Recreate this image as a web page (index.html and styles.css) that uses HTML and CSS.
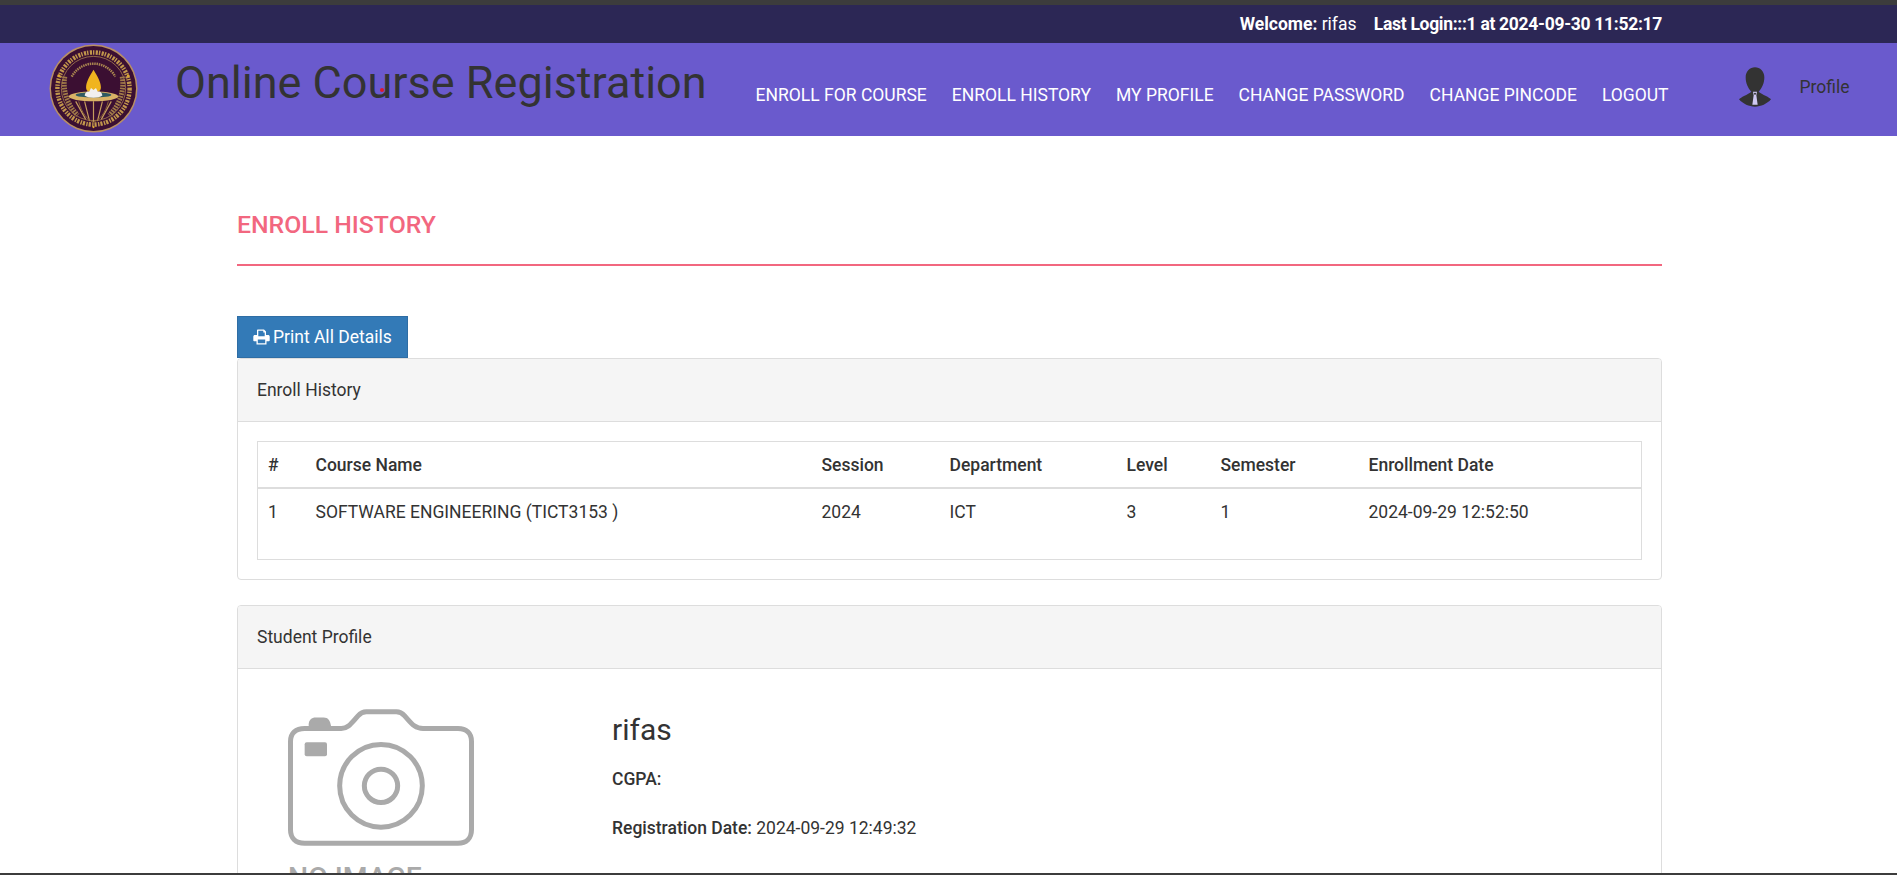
FILE: index.html
```html
<!DOCTYPE html>
<html lang="en">
<head>
<meta charset="utf-8">
<title>Enroll History</title>
<link rel="stylesheet" href="styles.css">
</head>
<body>
<header class="site-header">
  <div class="topbar">
    <div class="topbar-inner"><strong>Welcome:</strong> rifas <strong class="last-login">Last Login:::1 at 2024-09-30 11:52:17</strong></div>
  </div>
  <div class="navbar">
    <svg class="logo" viewBox="0 0 90 90" aria-label="University emblem">
      <circle cx="45" cy="45" r="44.500" fill="#b98f63"/>
      <circle cx="45" cy="45" r="43" fill="#3b0f32"/>
      <circle cx="45" cy="45" r="36.500" fill="none" stroke="#c2974c" stroke-width="4.500" stroke-dasharray="2.200 1 1.400 1.400"/>
      <circle cx="45" cy="45" r="32.500" fill="none" stroke="#a98050" stroke-width=".8"/>
      <path d="M23 33A25 25 0 0 1 67 33" fill="none" stroke="#a9854f" stroke-width="2.500" stroke-dasharray="1.500 .8"/>
      <path d="M16 33C14 45 17 60 29 72M74 33C76 45 73 60 61 72" fill="none" stroke="#a07a48" stroke-width="5" stroke-dasharray="1.800 1"/>
      <circle cx="10" cy="32" r="1.300" fill="#e0a92f"/>
      <circle cx="80" cy="32" r="1.300" fill="#e0a92f"/>
      <circle cx="45" cy="84" r="1.100" fill="#e0a92f"/>
      <path d="M27 58L37 76M36 58L41 78M45 58V79M54 58L49 78M63 58L53 76" stroke="#c59c5d" stroke-width="1.200" fill="none"/>
      <path d="M30 58C33 70 39 77 45 79C51 77 57 70 60 58" fill="none" stroke="#8a6238" stroke-width="1"/>
      <path d="M45 26C41 33 37.500 38 37.500 44C37.500 48 41 49 45 49C49 49 52.500 48 52.500 44C52.500 38 49 33 45 26Z" fill="#f0b41f"/>
      <ellipse cx="45" cy="53" rx="25" ry="5" fill="#d9b266"/>
      <ellipse cx="45" cy="51.500" rx="18" ry="2.700" fill="#2f5a62"/>
      <path d="M36 52C37 48 39 47.500 40.500 48.500L42.500 44.500L45 46.500L47.500 44.500L49.500 48.500C51 47.500 53 48 54 52C50 55 40 55 36 52Z" fill="#f1eff0"/>
    </svg>
    <h1 class="brand">Online Course Registration<span class="ink-dot"></span></h1>
    <nav class="nav-links">
      <a href="#">Enroll for course</a>
      <a href="#">Enroll History</a>
      <a href="#">My Profile</a>
      <a href="#">Change Password</a>
      <a href="#">Change Pincode</a>
      <a href="#">Logout</a>
    </nav>
    <div class="profile">
      <svg class="avatar" viewBox="0 0 96 118" aria-hidden="true">
        <path d="M48 0C33 0 20 12 20 30C20 48 27 62 37 73C33 77 24 81 15 86C9 89 3 93 0 96C12 110 30 118 48 118C66 118 84 110 96 96C93 93 87 89 81 86C72 81 63 77 59 73C69 62 76 48 76 30C76 12 63 0 48 0Z" fill="#333"/>
        <path d="M42 73H54L52 84L56 112H40L44 84Z" fill="#cfc8f2"/>
        <circle cx="48" cy="79" r="3" fill="#333"/>
      </svg>
      <span class="profile-label">Profile</span>
    </div>
  </div>
</header>
<main class="content">
  <h2 class="page-title">ENROLL HISTORY</h2>
  <button class="print-btn" type="button">
    <svg class="print-icon" viewBox="0 0 17 16" aria-hidden="true">
      <path d="M4 6V1.500C4 .9 4.400 .5 5 .5H11L13 2.500V6H15C16 6 16.700 6.700 16.700 7.700V11.500C16.700 12 16.300 12.300 15.900 12.300H13.500V15.500H3.500V12.300H1.100C.7 12.300 .3 12 .3 11.500V7.700C.3 6.700 1 6 2 6ZM5.300 1.800V7.300H11.700V3.500H10.300V1.800ZM4.800 10.500V14.200H12.200V10.500Z" fill="#fff" fill-rule="evenodd"/>
    </svg>
    Print All Details
  </button>
  <section class="panel panel-history">
    <div class="panel-heading">Enroll History</div>
    <div class="panel-body">
      <table class="history-table">
        <colgroup>
          <col class="c-num"><col class="c-course"><col class="c-session"><col class="c-dept"><col class="c-level"><col class="c-sem"><col class="c-date">
        </colgroup>
        <thead>
          <tr><th>#</th><th>Course Name</th><th>Session</th><th>Department</th><th>Level</th><th>Semester</th><th>Enrollment Date</th></tr>
        </thead>
        <tbody>
          <tr><td>1</td><td>SOFTWARE ENGINEERING (TICT3153 )</td><td>2024</td><td>ICT</td><td>3</td><td>1</td><td>2024-09-29 12:52:50</td></tr>
        </tbody>
      </table>
    </div>
  </section>
  <section class="panel">
    <div class="panel-heading">Student Profile</div>
    <div class="student-body">
      <div class="photo">
        <svg class="camera" viewBox="175 88 558 410" aria-hidden="true">
          <path d="M237 146V134C237 121 246 113 258 113H282C295 113 303 122 305 146Z" fill="#aaa"/>
          <path d="M225 146H335C355 146 365 130 385 108C392 100 398 95.500 410 95.500H500C512 95.500 518 100 525 108C545 130 555 146 580 146H685C710 146 725.500 160 725.500 185V450C725.500 475 710 490.500 685 490.500H225C198 490.500 182.500 475 182.500 450V185C182.500 160 198 146 225 146Z" fill="none" stroke="#aaa" stroke-width="15" stroke-linejoin="round"/>
          <rect x="225" y="187" width="67" height="42" rx="6" fill="#aaa"/>
          <circle cx="454" cy="318" r="124" fill="none" stroke="#aaa" stroke-width="15"/>
          <circle cx="454" cy="318" r="50" fill="none" stroke="#aaa" stroke-width="15"/>
        </svg>
        <div class="no-image">NO IMAGE</div>
      </div>
      <div class="student-info">
        <h3 class="student-name">rifas</h3>
        <p class="info-line"><strong>CGPA:</strong></p>
        <p class="info-line"><strong>Registration Date:</strong> 2024-09-29 12:49:32</p>
      </div>
    </div>
  </section>
</main>
<div class="window-edge"></div>
</body>
</html>
```
FILE: styles.css
```css
* { box-sizing: border-box; }
html, body { height: 875px; overflow: hidden; }
body {
  margin: 0;
  background: #fff;
  color: #333;
  font-family: Roboto, "Liberation Sans", sans-serif;
  font-size: 17.5px;
  line-height: 1.4286;
}
.site-header { border-top: 5px solid #3c3c3c; }
.topbar { height: 38px; background: #2c2755; color: #fff; }
.topbar-inner {
  margin: 0 235px 0 237px;
  padding-top: 7px;
  text-align: right;
  font-size: 17.5px;
  line-height: 24px;
}
.topbar strong { font-weight: 700; }
.last-login { margin-left: 13px; letter-spacing: -0.3px; }
.navbar {
  height: 93px;
  background: #6a5acd;
  display: flex;
  align-items: flex-start;
}
.logo { width: 89px; height: 89px; margin: 1px 0 0 49px; flex: none; }
.brand {
  position: relative;
  margin: 11px 0 0 37px;
  font-size: 45px;
  font-weight: 400;
  line-height: 58px;
  color: #333;
  white-space: nowrap;
}
.ink-dot {
  position: absolute;
  left: 205px;
  top: 34px;
  width: 4px;
  height: 4px;
  border-radius: 50%;
  background: #e0162b;
}
.nav-links { display: flex; gap: 25px; margin: 40px 0 0 49px; }
.nav-links a {
  color: #fff;
  text-decoration: none;
  text-transform: uppercase;
  font-size: 17.5px;
  line-height: 24px;
  white-space: nowrap;
}
.profile { display: flex; align-items: flex-start; margin-left: 70px; }
.avatar { width: 32px; height: 40px; margin-top: 24px; }
.profile-label { margin: 32px 0 0 29px; font-size: 17.5px; line-height: 24px; color: #333; }
.content { margin: 0 235px 0 237px; }
.page-title {
  margin: 73px 0 0;
  padding-bottom: 24px;
  border-bottom: 2px solid #f2677f;
  color: #f2677f;
  font-size: 24.8px;
  font-weight: 500;
  line-height: 31px;
}
.print-btn {
  display: flex;
  align-items: center;
  gap: 3px;
  height: 42px;
  margin: 50px 0 0;
  padding: 0 15px;
  border: 1px solid #2e6da4;
  background: #337ab7;
  color: #fff;
  font: 400 17.5px/24px Roboto, "Liberation Sans", sans-serif;
}
.print-icon { width: 17px; height: 16px; }
.panel { border: 1px solid #ddd; border-radius: 4px; background: #fff; }
.panel-history { margin-bottom: 25px; }
.panel-heading {
  height: 63px;
  padding: 20px 19px;
  background: #f5f5f5;
  border-bottom: 1px solid #ddd;
  line-height: 23px;
  border-radius: 3px 3px 0 0;
}
.panel-body { padding: 19px; }
.history-table {
  width: 100%;
  table-layout: fixed;
  border-collapse: collapse;
  border: 1px solid #ddd;
  height: 119px;
}
.c-num { width: 48px; }
.c-course { width: 506px; }
.c-session { width: 128px; }
.c-dept { width: 177px; }
.c-level { width: 94px; }
.c-sem { width: 148px; }
.history-table th, .history-table td { padding: 12px 10px 10px; text-align: left; vertical-align: top; line-height: 23px; }
.history-table th { font-weight: 500; border-bottom: 2px solid #ddd; height: 46px; padding: 12px 10px 9px; }
.student-body { display: flex; padding: 40px 19px 0; }
.photo { width: 355px; flex: none; padding-left: 31px; }
.camera { display: block; width: 186px; height: 137px; }
.no-image { margin-top: 14px; color: #aaa; font-size: 28.4px; font-weight: 500; line-height: 36px; width: 186px; white-space: nowrap; }
.student-name { margin: 1px 0 0; font-size: 30px; font-weight: 400; line-height: 40px; }
.info-line { margin: 18px 0 0; line-height: 23px; }
.info-line + .info-line { margin-top: 26px; }
.info-line strong { font-weight: 500; }
.window-edge { position: fixed; left: 0; right: 0; bottom: 0; height: 2px; background: #3c3c3c; }
```
